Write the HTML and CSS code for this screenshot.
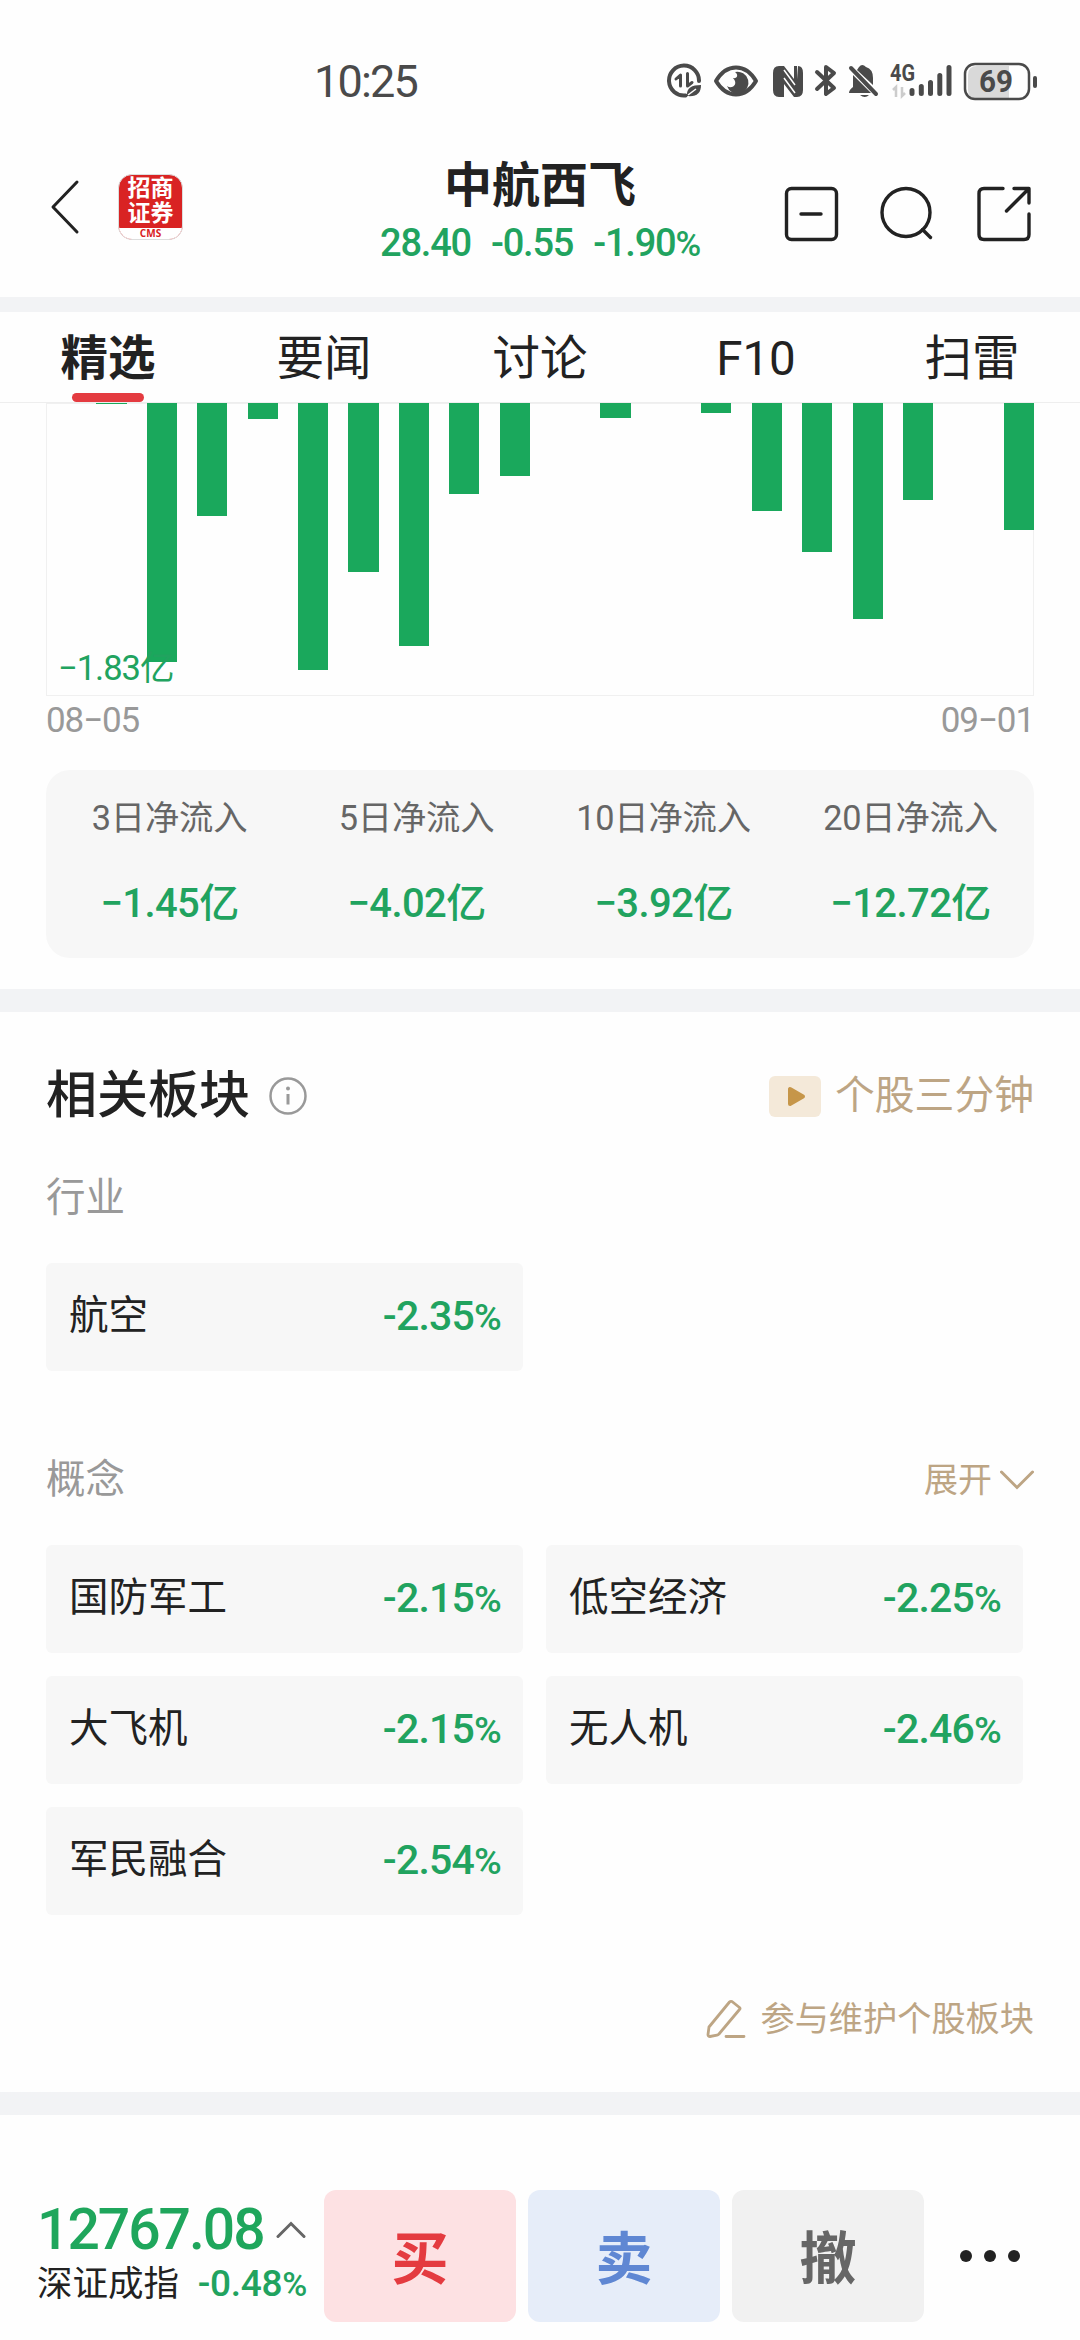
FILE: index.html
```
<!DOCTYPE html>
<html lang="zh-CN">

<head>
    <meta charset="UTF-8">
    <meta name="viewport" content="width=device-width, initial-scale=1.0">
    <title>中航西飞</title>
    <link rel="stylesheet" href="styles.css">
</head>

<body>

    <!-- Status bar -->
    <div class="status-bar">
        <span class="time">10:25</span>
        <div class="status-icons">
            <svg class="status-svg" width="380" height="48" viewBox="0 0 380 48">
                <g fill="none" stroke="#4a4a4a" stroke-width="4" stroke-linecap="round" stroke-linejoin="round">
                    <path d="M18.500 38.500A15 15 0 1 1 32 24" />
                    <path d="M9 22l4.500-4V29M20.500 16.500V29l4.500-3.500" stroke-width="3" />
                    <path d="M49 24Q57 10.500 69 10.500T89 24Q81 37.500 69 37.500T49 24Z" />
                    <path d="M150 15l17 16-8 6V10l8 6-17 16" />
                    <path d="M184 11l25 26" />
                </g>
                <path d="M20 39c-1-8 5-11 14-11 0 8-4 12-14 11z" fill="#4a4a4a" />
                <path d="M21 38l8-6" stroke="#fff" stroke-width="1.500" />
                <path d="M68 15a11 11 0 1 1-8 14c5 4 12-2 6-8 4 1 6-3 2-6z" fill="#4a4a4a" />
                <path d="M112 9h3v31h-3q-6 0-6-7V16q0-7 6-7zM131 9q5 0 5 7v17q0 7-6 7l-1-4z" fill="#4a4a4a" />
                <path d="M117 9l10 13V9h3v31h-3L117 27v13h-2V9z" fill="#4a4a4a" />
                <path d="M117 13l11 15M117 21l11 15" stroke="#fff" stroke-width="1.500" />
                <path d="M190 13l16 15V21q0-9-7-11-4-4-7 0zM186 18l18 18H182q0-3 4-6zM193 38h9q-4 4-9 0z" fill="#4a4a4a" />
                <g fill="none" stroke="#4a4a4a" stroke-width="5" stroke-linecap="round">
                    <path d="M245 33.500v3M254.300 29.500v7M263.500 25.500v11M272.800 18.500v18M282 10.500v26" />
                </g>
                <path d="M226 33l3-3v10M235 30v9l3-3" fill="none" stroke="#ccc" stroke-width="2.500" />
                <text x="223" y="24" class="net-text" textLength="25" lengthAdjust="spacingAndGlyphs">4G</text>
                <path d="M310 9h32v33h-32q-9 0-9-9V18q0-9 9-9z" fill="#d9d9d9" />
                <rect x="298" y="7" width="64" height="35" rx="10" fill="none" stroke="#4a4a4a" stroke-width="2.500" />
                <path d="M368 21v8" stroke="#4a4a4a" stroke-width="4" stroke-linecap="round" />
                <text x="312" y="35" class="battery-text" textLength="34" lengthAdjust="spacingAndGlyphs">69</text>
            </svg>
        </div>
    </div>

    <!-- Header -->
    <div class="header">
        <div class="header-left">
            <svg width="32" height="56" viewBox="0 0 32 56">
                <path d="M27 3L3 28l24 25" fill="none" stroke="#222" stroke-width="3" stroke-linecap="round" stroke-linejoin="round" />
            </svg>
            <div class="logo">
                <div class="logo-name">招商<br>证券</div>
                <div class="logo-sub">CMS</div>
            </div>
        </div>
        <div class="stock">
            <div class="stock-name">中航西飞</div>
            <div class="stock-price"><span>28.40</span><span>-0.55</span><span>-1.90<i>%</i></span></div>
        </div>
        <div class="header-icons">
            <svg width="56" height="56" viewBox="0 0 56 56" class="line-icon">
                <rect x="2.500" y="2.500" width="50" height="51" rx="5" />
                <path d="M17 28h20" />
            </svg>
            <svg width="56" height="56" viewBox="0 0 56 56" class="line-icon">
                <circle cx="26" cy="26.500" r="24" />
                <path d="M42.500 43.500l8 8" />
            </svg>
            <svg width="56" height="56" viewBox="0 0 56 56" class="line-icon">
                <path d="M27 2.500H8q-5 0-5 5v41q0 5 5 5h40q5 0 5-5V28M38 2.500h15v14.500M30.500 25L52 3.500" />
            </svg>
        </div>
    </div>

    <!-- Tabs -->
    <div class="tabs">
        <div class="tab active">精选</div>
        <div class="tab">要闻</div>
        <div class="tab">讨论</div>
        <div class="tab">F10</div>
        <div class="tab">扫雷</div>
    </div>

    <!-- Money flow -->
    <div class="flow">
        <div class="chart">
            <div class="bar" style="height: 0"></div>
            <div class="bar" style="height: 1px"></div>
            <div class="bar" style="height: 259px"></div>
            <div class="bar" style="height: 113px"></div>
            <div class="bar" style="height: 16px"></div>
            <div class="bar" style="height: 267px"></div>
            <div class="bar" style="height: 169px"></div>
            <div class="bar" style="height: 243px"></div>
            <div class="bar" style="height: 91px"></div>
            <div class="bar" style="height: 73px"></div>
            <div class="bar" style="height: 0"></div>
            <div class="bar" style="height: 15px"></div>
            <div class="bar" style="height: 0"></div>
            <div class="bar" style="height: 10px"></div>
            <div class="bar" style="height: 108px"></div>
            <div class="bar" style="height: 149px"></div>
            <div class="bar" style="height: 216px"></div>
            <div class="bar" style="height: 97px"></div>
            <div class="bar" style="height: 0"></div>
            <div class="bar" style="height: 127px"></div>
            <span class="chart-min">−1.83亿</span>
        </div>
        <div class="dates"><span>08−05</span><span>09−01</span></div>
        <div class="summary">
            <div class="summary-item"><span class="label">3日净流入</span><span class="value">−1.45亿</span></div>
            <div class="summary-item"><span class="label">5日净流入</span><span class="value">−4.02亿</span></div>
            <div class="summary-item"><span class="label">10日净流入</span><span class="value">−3.92亿</span></div>
            <div class="summary-item"><span class="label">20日净流入</span><span class="value">−12.72亿</span></div>
        </div>
    </div>

    <!-- Related sectors -->
    <div class="sectors">
        <div class="sectors-head">
            <h2>相关板块</h2>
            <svg width="40" height="40" viewBox="0 0 40 40">
                <circle cx="20" cy="20" r="17.500" fill="none" stroke="#999" stroke-width="2.500" />
                <circle cx="20" cy="12.500" r="2" fill="#999" />
                <path d="M20 18v10.500" stroke="#999" stroke-width="3" />
            </svg>
            <a class="video-link" href="#">
                <svg width="52" height="41" viewBox="0 0 52 41">
                    <rect width="52" height="41" rx="6" fill="#f4e9d9" />
                    <path d="M21 13v15l13-7.500z" fill="#c69649" stroke="#c69649" stroke-width="4" stroke-linejoin="round" />
                </svg>
                个股三分钟
            </a>
        </div>

        <div class="group-head"><span>行业</span></div>
        <div class="grid">
            <div class="chip"><span>航空</span><b>-2.35<i>%</i></b></div>
        </div>

        <div class="group-head second">
            <span>概念</span>
            <a class="expand" href="#">展开
                <svg width="34" height="20" viewBox="0 0 34 20">
                    <path d="M1.500 2L17 17.500 32.500 2" fill="none" stroke="#bda584" stroke-width="3" stroke-linecap="round" />
                </svg>
            </a>
        </div>
        <div class="grid">
            <div class="chip"><span>国防军工</span><b>-2.15<i>%</i></b></div>
            <div class="chip"><span>低空经济</span><b>-2.25<i>%</i></b></div>
            <div class="chip"><span>大飞机</span><b>-2.15<i>%</i></b></div>
            <div class="chip"><span>无人机</span><b>-2.46<i>%</i></b></div>
            <div class="chip"><span>军民融合</span><b>-2.54<i>%</i></b></div>
        </div>

        <a class="edit-link" href="#">
            <svg width="40" height="40" viewBox="0 0 40 40">
                <path d="M26 2.500l7.500 6q1 1 0 2L13 35q-1 1-2 1.200L4 37.500q-2 0-2-2L3 28 23.500 3q1-1 2.500-.5zM20 37.500h18" fill="none" stroke="#bda584" stroke-width="2.800" stroke-linecap="round" stroke-linejoin="round" />
            </svg>
            参与维护个股板块
        </a>
    </div>

    <!-- Bottom bar -->
    <div class="bottom-bar">
        <div class="index">
            <div class="index-value">
                <span>12767.08</span>
                <svg width="30" height="18" viewBox="0 0 30 18">
                    <path d="M2 15.500L15 2.500l13 13" fill="none" stroke="#666" stroke-width="3" stroke-linecap="round" />
                </svg>
            </div>
            <div class="index-name"><span>深证成指</span><b>-0.48<i>%</i></b></div>
        </div>
        <button class="btn buy">买</button>
        <button class="btn sell">卖</button>
        <button class="btn cancel">撤</button>
        <div class="more"><span></span><span></span><span></span></div>
    </div>

</body>

</html>
```
FILE: styles.css
```
* {
    box-sizing: border-box;
}

body {
    margin: 0;
    width: 1080px;
    height: 2340px;
    overflow: hidden;
    background: #fefefe;
    color: #222;
    font-family: Roboto, "Noto Sans CJK SC", sans-serif;
    display: flex;
    flex-direction: column;
}

svg {
    display: block;
    flex: none;
}

i {
    font-style: normal;
}

a {
    color: #bda584;
    text-decoration: none;
}

.status-bar {
    height: 140px;
    padding: 57px 33px 0 314px;
    display: flex;
    justify-content: space-between;
}

.time {
    font-size: 45px;
    line-height: 49px;
    color: #4a4a4a;
    letter-spacing: -1.8px;
}

.net-text {
    font-size: 23px;
    font-weight: 700;
    fill: #4a4a4a;
}

.battery-text {
    font-size: 31px;
    font-weight: 700;
    fill: #4a4a4a;
}

.header {
    height: 172px;
    border-bottom: 15px solid #f2f3f5;
    display: grid;
    grid-template-columns: 360px 360px 360px;
}

.header-left {
    display: flex;
    align-items: flex-start;
    padding: 39px 0 0 50px;
    gap: 36px;
}

.logo {
    width: 65px;
    height: 66px;
    margin-top: -5px;
    border-radius: 14px;
    background: #d92323;
    border: 1px solid #ddd;
    overflow: hidden;
    text-align: center;
}

.logo-name {
    height: 53px;
    padding-top: 1px;
    font-size: 23px;
    line-height: 25px;
    font-weight: 700;
    color: #fff;
}

.logo-sub {
    height: 12px;
    background: #fff;
    color: #d92323;
    font-family: "Open Sans", sans-serif;
    font-size: 10px;
    line-height: 10px;
    font-weight: 700;
}

.stock {
    text-align: center;
}

.stock-name {
    margin-top: 18px;
    font-size: 48px;
    line-height: 56px;
    font-weight: 700;
}

.stock-price {
    display: flex;
    justify-content: center;
    gap: 20px;
    margin-top: 7px;
    font-size: 38px;
    line-height: 44px;
    font-weight: 500;
    letter-spacing: -1.2px;
    color: #21a35f;
}

.stock-price i,
.chip i,
.index-name i {
    font-size: 0.92em;
}

.header-icons {
    display: flex;
    padding: 46px 0 0 64px;
    gap: 40px;
}

.line-icon {
    fill: none;
    stroke: #222;
    stroke-width: 3.4px;
    stroke-linecap: round;
    stroke-linejoin: round;
}

.tabs {
    height: 91px;
    border-bottom: 1px solid #eee;
    display: grid;
    grid-template-columns: repeat(5, 1fr);
}

.tab {
    display: flex;
    flex-direction: column;
    align-items: center;
    height: 90px;
    font-size: 47.5px;
    line-height: 94px;
}

.tab.active {
    font-weight: 700;
}

.tab.active::after {
    content: "";
    width: 72px;
    height: 9px;
    margin-top: -13px;
    border-radius: 5px;
    background: #e43b40;
}

.flow {
    height: 609px;
    padding: 0 46px;
    border-bottom: 23px solid #f2f3f5;
}

.chart {
    position: relative;
    height: 293px;
    display: flex;
    justify-content: space-between;
    align-items: flex-start;
    box-shadow: inset 0 0 0 1px #f0f0f0;
}

.bar {
    width: 30.2px;
    background: #1aa85c;
}

.chart-min {
    position: absolute;
    left: 12px;
    bottom: 8px;
    font-size: 34.5px;
    line-height: 40px;
    letter-spacing: -1px;
    color: #21a35f;
}

.dates {
    display: flex;
    justify-content: space-between;
    padding: 5px 0 0;
    font-size: 35px;
    line-height: 40px;
    letter-spacing: -1.1px;
    color: #999;
}

.summary {
    margin-top: 29px;
    height: 188px;
    border-radius: 24px;
    background: #f7f7f7;
    display: grid;
    grid-template-columns: repeat(4, 1fr);
}

.summary-item {
    display: flex;
    flex-direction: column;
    align-items: center;
}

.label {
    margin-top: 27px;
    font-size: 34.3px;
    line-height: 42px;
    letter-spacing: -0.2px;
    color: #666;
}

.value {
    margin-top: 40px;
    font-size: 40px;
    line-height: 50px;
    font-weight: 500;
    letter-spacing: -0.6px;
    color: #21a35f;
}

.sectors {
    height: 1103px;
    padding: 0 46px;
    border-bottom: 23px solid #f2f3f5;
}

.sectors-head {
    display: flex;
    align-items: center;
    padding-top: 54px;
}

h2 {
    margin: 0 18px 0 0;
    font-size: 51px;
    line-height: 60px;
    font-weight: 500;
}

.video-link {
    display: flex;
    align-items: center;
    gap: 14px;
    margin-left: auto;
    font-size: 39.8px;
    line-height: 48px;
}

.group-head {
    height: 137px;
    padding-top: 47px;
    display: flex;
    justify-content: space-between;
    align-items: flex-start;
    font-size: 39.5px;
    line-height: 50px;
    color: #999;
}

.group-head.second {
    height: 174px;
    padding-top: 84px;
}

.expand {
    display: flex;
    align-items: center;
    gap: 8px;
    font-size: 34px;
}

.grid {
    display: grid;
    grid-template-columns: 477px 477px;
    gap: 23px;
}

.chip {
    height: 108px;
    padding: 0 22px 0 23px;
    border-radius: 6px;
    background: #f7f7f7;
    display: flex;
    align-items: center;
    justify-content: space-between;
    font-size: 39.5px;
    line-height: 50px;
}

.chip span {
    padding-bottom: 2px;
}

.chip b {
    padding-bottom: 2px;
    font-size: 41px;
    font-weight: 500;
    color: #21a35f;
    letter-spacing: -0.8px;
}

.edit-link {
    display: flex;
    align-items: center;
    justify-content: flex-end;
    gap: 14px;
    margin-top: 83px;
    font-size: 34.2px;
    line-height: 42px;
}

.bottom-bar {
    height: 225px;
    padding: 75px 0 0 37px;
    display: flex;
    align-items: flex-start;
}

.index {
    width: 287px;
    padding-top: 12px;
}

.index-value {
    display: flex;
    align-items: center;
    justify-content: space-between;
    padding-right: 18px;
    font-size: 57px;
    line-height: 55px;
    font-weight: 500;
    color: #1fa65c;
    letter-spacing: -2px;
}

.index-name {
    display: flex;
    align-items: center;
    justify-content: space-between;
    padding-right: 17px;
    font-size: 35.5px;
    line-height: 54px;
}

.index-name b {
    font-size: 37px;
    font-weight: 500;
    letter-spacing: -0.3px;
    color: #21a35f;
}

.btn {
    width: 192px;
    height: 132px;
    margin-right: 12px;
    padding: 0 0 4px;
    border: none;
    border-radius: 12px;
    font-family: inherit;
    font-size: 57px;
    font-weight: 700;
}

.buy {
    background: #fde1e3;
    color: #e43b40;
}

.sell {
    background: #e6edf9;
    color: #5f87d3;
}

.cancel {
    background: #f1f1f1;
    color: #666;
}

.more {
    display: flex;
    gap: 12px;
    margin: 60px 0 0 24px;
}

.more span {
    width: 12px;
    height: 12px;
    border-radius: 50%;
    background: #222;
}
```
